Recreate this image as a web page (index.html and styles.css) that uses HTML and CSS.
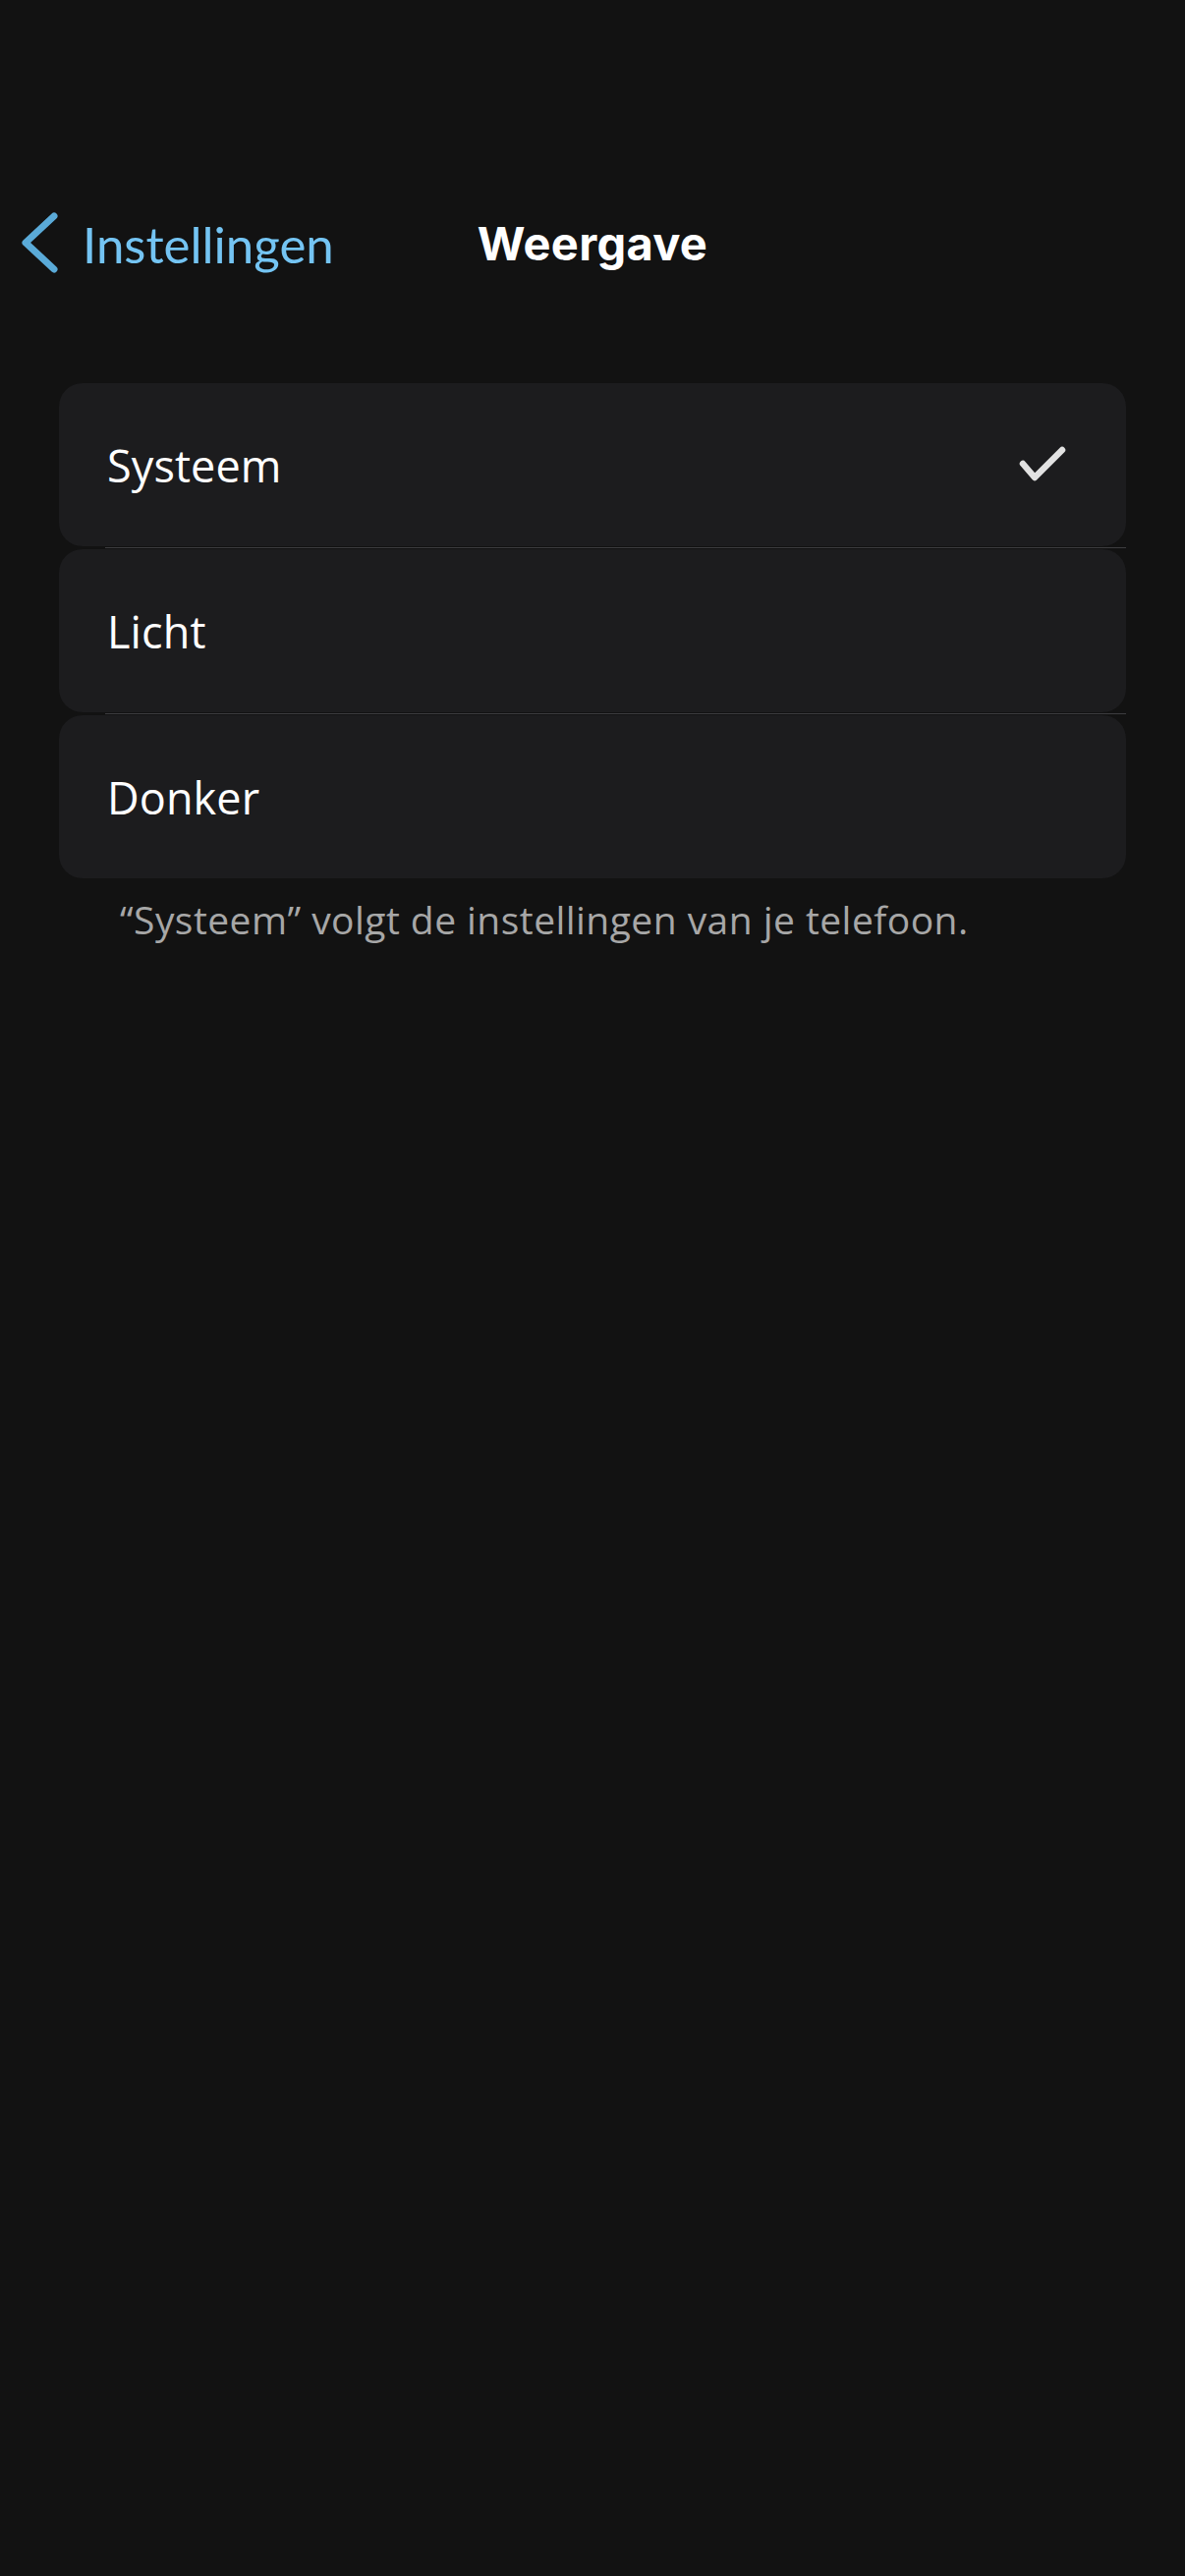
FILE: index.html
```html
<!DOCTYPE html>
<html lang="nl">
<head>
<meta charset="utf-8">
<title>Weergave</title>
<link rel="stylesheet" href="styles.css">
</head>
<body>
<div class="screen">
  <header class="navbar">
    <a class="back" href="#">
      <svg class="chevron" width="40" height="62" viewBox="0 0 40 62" aria-hidden="true">
        <polyline points="33,4 4,31 33,58" fill="none" stroke="#5aaad8" stroke-width="7" stroke-linecap="round" stroke-linejoin="round"/>
      </svg>
      <span class="back-label">Instellingen</span>
    </a>
    <h1 class="title">Weergave</h1>
    <div class="spacer"></div>
  </header>

  <main class="content">
    <ul class="options">
      <li class="option">
        <span class="option-label">Systeem</span>
        <svg class="check" width="50" height="40" viewBox="0 0 50 40" aria-hidden="true">
          <polyline points="5,18 17,32 45,4" fill="none" stroke="#e2e2e2" stroke-width="6.5" stroke-linecap="round" stroke-linejoin="round"/>
        </svg>
      </li>
      <li class="divider"></li>
      <li class="option">
        <span class="option-label">Licht</span>
      </li>
      <li class="divider"></li>
      <li class="option">
        <span class="option-label">Donker</span>
      </li>
    </ul>
    <p class="footnote">“Systeem” volgt de instellingen van je telefoon.</p>
  </main>
</div>
</body>
</html>
```

FILE: styles.css
```css
html, body {
  margin: 0;
  padding: 0;
  background: #121212;
}

body {
  width: 1206px;
  min-height: 2622px;
  font-family: "Open Sans", Lato, sans-serif;
  color: #ffffff;
}

.screen {
  padding-top: 197px;
}

.navbar {
  display: grid;
  grid-template-columns: 1fr auto 1fr;
  align-items: center;
  height: 100px;
}

.back {
  display: flex;
  align-items: center;
  gap: 22px;
  padding-left: 22px;
  text-decoration: none;
}

.chevron {
  display: block;
  flex: none;
}

.back-label {
  font-family: Lato, sans-serif;
  font-size: 51px;
  color: #74c4f3;
  line-height: 1;
  padding-top: 2px;
}

.title {
  margin: 0;
  font-family: Inter, Roboto, sans-serif;
  font-weight: 700;
  font-size: 47px;
  line-height: 1;
  color: #ffffff;
  letter-spacing: 0.3px;
}

.content {
  padding: 93px 60px 0;
}

.options {
  list-style: none;
  margin: 0;
  padding: 0;
}

.option {
  display: flex;
  align-items: center;
  justify-content: space-between;
  height: 166px;
  padding: 0 60px 0 49px;
  background: #1c1c1e;
  border-radius: 24px;
  box-sizing: border-box;
}

.option-label {
  font-size: 45px;
  line-height: 1;
  color: #ffffff;
  letter-spacing: 0.1px;
}

.check {
  display: block;
  margin-top: 2px;
}

.divider {
  height: 1px;
  margin: 1px 0 1px 47px;
  background: #3d3d40;
}

.footnote {
  margin: 19px 0 0 62px;
  font-size: 39px;
  line-height: 1.2;
  color: #a7a7a7;
  letter-spacing: 0.45px;
}
```
